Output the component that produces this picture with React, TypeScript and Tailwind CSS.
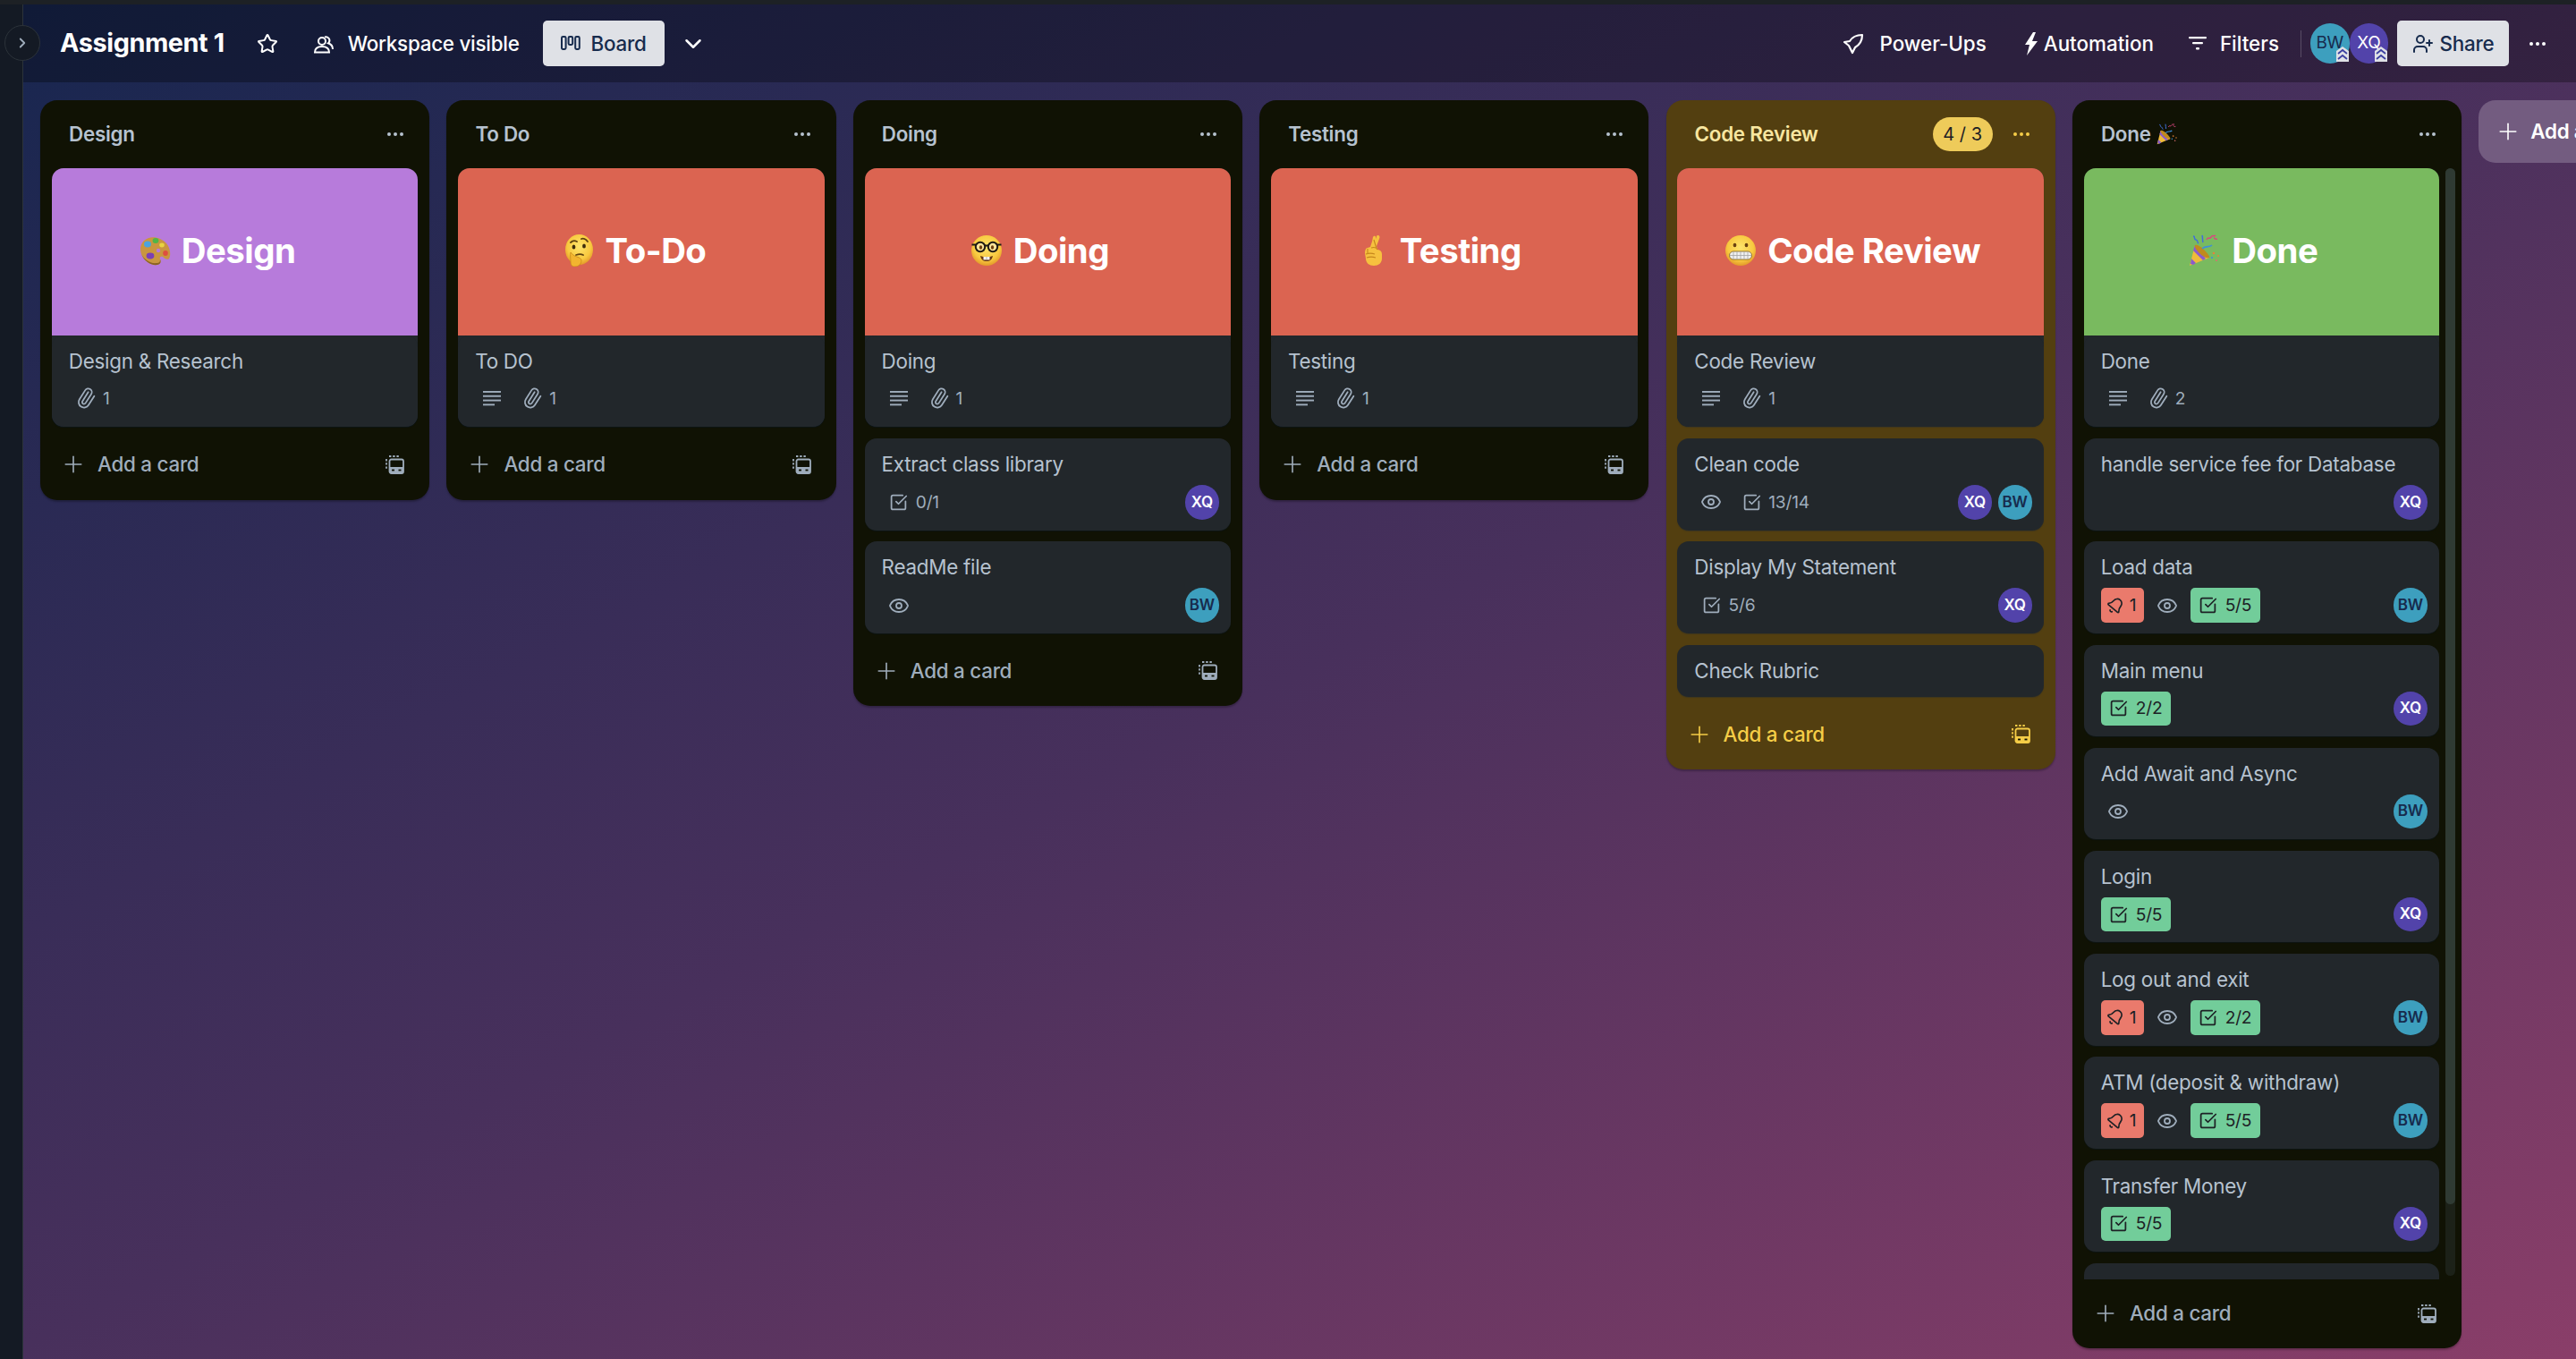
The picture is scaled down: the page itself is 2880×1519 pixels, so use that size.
import { Bell, CheckSquare, ChevronDown, ChevronRight, Eye, Paperclip, Plus, Star, UserPlus } from "lucide-react";
import type { ReactNode } from "react";

type Who = "BW" | "XQ";
type Emoji = "palette" | "think" | "nerd" | "fingers" | "grimace" | "popper";

interface CardData {
  title: string;
  lines?: boolean;
  clip?: number;
  watch?: boolean;
  check?: string;
  done?: boolean;
  alert?: boolean;
  who?: Who[];
  plain?: boolean;
  cover?: boolean;
}

interface CoverData {
  tone: string;
  shift: string;
  emoji: Emoji;
  label: string;
  caption: string;
  clip: number;
  lines: boolean;
}

function Dots({ className = "" }: { className?: string }) {
  return (
    <svg width="20" height="6" viewBox="0 0 20 6" className={className} fill="currentColor">
      <circle cx="3" cy="3" r="2" />
      <circle cx="10" cy="3" r="2" />
      <circle cx="17" cy="3" r="2" />
    </svg>
  );
}

function Face({ id }: { id: string }) {
  return (
    <defs>
      <radialGradient id={id} cx="50%" cy="40%" r="60%">
        <stop offset="0%" stopColor="#fde46b" />
        <stop offset="70%" stopColor="#f8c93f" />
        <stop offset="100%" stopColor="#e39a2a" />
      </radialGradient>
    </defs>
  );
}

function EmojiIcon({ name, size = 36 }: { name: Emoji; size?: number }) {
  if (name === "palette")
    return (
      <svg width={size} height={size} viewBox="0 0 36 36">
        <path d="M6 7C12 1 24 2 31 10c5 6 5 14 3 17-2 2-5 0-7-2-2-1-4 0-3 3 1 2 1 5-3 6C14 35 6 30 3 22 1 16 2 11 6 7z" fill="#c9963f" />
        <path d="M3 22c3 8 11 13 18 12 4-1 4-4 3-6 0 3-1 4-4 4-7 1-14-4-17-10z" fill="#8a6224" />
        <ellipse cx="10" cy="11" rx="4" ry="3.4" fill="#4aa3df" />
        <ellipse cx="19" cy="7" rx="3.4" ry="3" fill="#4fb648" />
        <ellipse cx="26" cy="12" rx="2.8" ry="2.4" fill="#e8d33f" />
        <ellipse cx="13" cy="24" rx="4.4" ry="3.4" fill="#7b3fb5" />
        <ellipse cx="30" cy="21" rx="2.8" ry="3" fill="#de4f3f" />
        <circle cx="22" cy="18" r="2.2" fill="#b77bdb" />
      </svg>
    );
  if (name === "think")
    return (
      <svg width={size} height={size} viewBox="0 0 36 36">
        <Face id="faceThink" />
        <ellipse cx="18.5" cy="17" rx="15.5" ry="17" fill="url(#faceThink)" />
        <path d="M9 9c2-2 5-2 7-1M21 5c2-1 5 0 7 3" stroke="#5e4210" strokeWidth="1.8" fill="none" strokeLinecap="round" />
        <ellipse cx="12.5" cy="14" rx="1.9" ry="2.5" fill="#3d2c0c" />
        <ellipse cx="24" cy="13" rx="1.9" ry="2.5" fill="#3d2c0c" />
        <path d="M15 23c3-1 6-1 8 0" stroke="#5e4210" strokeWidth="1.8" fill="none" strokeLinecap="round" />
        <path d="M9 20c2 2 3 4 7 5 3 1 5 2 5 4 0 4-3 7-7 7-4 0-5-2-5-6 0-3-1-7 0-10z" fill="#f2b52f" stroke="#c98a1c" strokeWidth="0.8" />
      </svg>
    );
  if (name === "nerd")
    return (
      <svg width={size} height={size} viewBox="0 0 36 36">
        <Face id="faceNerd" />
        <circle cx="18" cy="18" r="17" fill="url(#faceNerd)" />
        <circle cx="11" cy="14" r="5.2" fill="#f9e39a" stroke="#1d1a14" strokeWidth="2" />
        <circle cx="25" cy="14" r="5.2" fill="#f9e39a" stroke="#1d1a14" strokeWidth="2" />
        <path d="M16 12.5h4M1.5 11.5h4.5M30 11.5h4.5" stroke="#1d1a14" strokeWidth="2" />
        <ellipse cx="11.5" cy="14.5" rx="1.6" ry="2.2" fill="#6b3f10" />
        <ellipse cx="24.5" cy="14.5" rx="1.6" ry="2.2" fill="#6b3f10" />
        <path d="M11 24c4 1.6 10 1.6 14 0-1 4-3 6-7 6s-6-2-7-6z" fill="#6b3a14" />
        <path d="M14.5 25h7v3.4h-7z" fill="#f5f5f5" />
        <path d="M18 25v3.4" stroke="#999" strokeWidth="0.7" />
      </svg>
    );
  if (name === "fingers")
    return (
      <svg width={size} height={size} viewBox="0 0 36 36">
        <path d="M24 1c1.5.5 2 2 1 4l-3 8 1 4c3 .5 5 2 5 5v5c0 5-4 8-9 8s-9-3-9-8l-1-6c0-3 1-6 3-6l3-1 2-6 1-5c1-2 3-1.500 3 0l.5 2L22 2c.5-1 1-1.300 2-1z" fill="#f6c13f" />
        <path d="M16 15c3-1 6 0 7 2M12 16v6M10 22c3-1 7-1 10 0M11 26c3-1 7-1 10 0M19 6l3 10" stroke="#c6861d" strokeWidth="1.1" fill="none" />
      </svg>
    );
  if (name === "grimace")
    return (
      <svg width={size} height={size} viewBox="0 0 36 36">
        <Face id="faceGrim" />
        <circle cx="18" cy="18" r="17" fill="url(#faceGrim)" />
        <ellipse cx="11.500" cy="12" rx="1.900" ry="2.300" fill="#6b4210" />
        <ellipse cx="24.500" cy="12" rx="1.900" ry="2.300" fill="#6b4210" />
        <rect x="5.500" y="19" width="25" height="9" rx="4.500" fill="#efefef" stroke="#7a5a1a" strokeWidth="0.800" />
        <path d="M6 23.500h24M10 19.500v8M14 19v9M18 19v9M22 19v9M26 19.500v8" stroke="#a5a5a5" strokeWidth="0.800" />
      </svg>
    );
  return (
    <svg width={size} height={size} viewBox="0 0 36 36">
      <path d="M1 35l6-23 16 14z" fill="#eebb3a" />
      <path d="M3 27l5 5-3 2-3-1zM5 18l11 11 3-2L7 12z" fill="#8a5ccc" />
      <path d="M23 26c-3 1-7-1-11-5S6 13 7 12c2-1 6 1 10 5s7 8 6 9z" fill="#c08a1e" />
      <path d="M5 2c3 0 0 3 3 4s1 3 3 4M15 1c1 3 0 5 1 8" stroke="#3f6fd9" strokeWidth="1.500" fill="none" />
      <path d="M15 16c4-4 8-1 11-4" stroke="#3f8fd9" strokeWidth="1.600" fill="none" />
      <path d="M20 6c2-4 3 0 5-3s3 0 5-2M28 4c2 0 1 2 4 1" stroke="#d9477f" strokeWidth="1.500" fill="none" />
      <circle cx="28" cy="21" r="1.300" fill="#e2843c" />
      <circle cx="33" cy="24" r="1.100" fill="#e2843c" />
      <circle cx="31" cy="29" r="1.100" fill="#d97070" />
      <circle cx="26" cy="26" r="1.100" fill="#3f8fd9" />
    </svg>
  );
}

function LinesIcon() {
  return (
    <svg width="20" height="18" viewBox="0 0 20 18" fill="currentColor">
      <rect x="0" y="1" width="20" height="1.900" />
      <rect x="0" y="5.800" width="20" height="1.900" />
      <rect x="0" y="10.600" width="20" height="1.900" />
      <rect x="0" y="15.400" width="13" height="1.900" />
    </svg>
  );
}

function TemplateIcon() {
  return (
    <svg width="21" height="21" viewBox="0 0 21 21" fill="none">
      <path d="M1 4v12.500M4 1h12.500" stroke="currentColor" strokeWidth="1.800" strokeDasharray="2.400 1.800" />
      <rect x="4.500" y="4.500" width="15.500" height="15.500" rx="2" stroke="currentColor" strokeWidth="1.800" />
      <path d="M4.500 13h15.500v5a2 2 0 0 1-2 2H6.500a2 2 0 0 1-2-2z" fill="currentColor" />
      <rect x="7" y="15.600" width="3" height="1.800" fill="#101204" />
      <rect x="14.500" y="15.600" width="3" height="1.800" fill="#101204" />
    </svg>
  );
}

function Avatar({ who, big }: { who: Who; big?: boolean }) {
  const tone = who === "BW" ? "bg-[#3d9fbe] text-[#172b4d]" : "bg-[#5243aa] text-white";
  if (big) {
    return (
      <div className={`relative flex h-[45px] w-[43.5px] shrink-0 items-center justify-center rounded-full text-[19px] tracking-[-0.3px] ${tone}`}>
        {who}
        <svg width="14" height="17" viewBox="0 0 14 17" className="absolute bottom-[2px] right-[1px]">
          <path d="M0 5l7-5 7 5v12H0z" fill="#dfe1e6" />
          <path d="M2 8l5-4 5 4M2 14l5-4 5 4" stroke="#3b3fa0" strokeWidth="1.800" fill="none" />
        </svg>
      </div>
    );
  }
  return (
    <div className={`flex h-[38.4px] w-[38.4px] shrink-0 items-center justify-center rounded-full text-[17px] font-semibold tracking-[-0.2px] ${tone}`}>
      {who}
    </div>
  );
}

function Meta({ icon, text }: { icon: ReactNode; text?: string }) {
  return (
    <div className="mr-[6.4px] flex h-[32px] items-center px-[3.2px] text-[#9fadbc]">
      <span className="flex w-[32px] justify-center">{icon}</span>
      {text && <span className="ml-[3px] text-[19.2px] leading-none tracking-[-0.2px]">{text}</span>}
    </div>
  );
}

function Card({ card }: { card: CardData }) {
  const hasRow = !card.plain;
  return (
    <div className={`rounded-[13px] bg-[#22272b] pl-[19px] pr-[13px] pt-[13px] shadow-[0_1px_1px_#091e4240] ${hasRow ? (card.cover ? "pb-[13px]" : "pb-[12px]") : "pb-[13.6px]"}`}>
      <div className="h-[32px] text-[22.4px] leading-[32px] tracking-[-0.25px] text-[#b6c2cf]">{card.title}</div>
      {hasRow && (
        <div className={`flex h-[38.4px] items-center ${card.cover ? "mt-[6px]" : "mt-[7px]"}`}>
          {card.alert && (
            <div className="mr-[6.4px] flex h-[38.4px] items-center rounded-[5px] bg-[#ea7a6c] pr-[9px] text-[#1d2125]">
              <span className="flex w-[32px] justify-center">
                <Bell size={20} className="rotate-[40deg]" />
              </span>
              <span className="text-[19.2px]">1</span>
            </div>
          )}
          {card.lines && <Meta icon={<LinesIcon />} />}
          {card.watch && <Meta icon={<Eye size={24} strokeWidth={1.8} />} />}
          {card.clip && (
            <Meta icon={<Paperclip size={24} strokeWidth={1.8} className="-rotate-[12deg]" />} text={String(card.clip)} />
          )}
          {card.check && !card.done && <Meta icon={<CheckSquare size={21} strokeWidth={2} />} text={card.check} />}
          {card.check && card.done && (
            <div className="flex h-[38.4px] items-center rounded-[5px] bg-[#72cd9a] pl-[4px] pr-[10px] text-[#1d2125]">
              <span className="flex w-[32px] justify-center">
                <CheckSquare size={21} strokeWidth={2} />
              </span>
              <span className="ml-[3px] text-[19.2px] tracking-[-0.2px]">{card.check}</span>
            </div>
          )}
          <div className="ml-auto flex gap-[6.4px]">
            {card.who?.map((w) => <Avatar key={w} who={w} />)}
          </div>
        </div>
      )}
    </div>
  );
}

function CoverCard({ tone, shift, emoji, label, caption, clip, lines }: CoverData) {
  return (
    <div className="overflow-hidden rounded-[13px] bg-[#22272b] shadow-[0_1px_1px_#091e4240]">
      <div className={`flex h-[187px] items-center justify-center gap-[12px] pb-[3px] ${tone} ${shift}`}>
        <EmojiIcon name={emoji} />
        <span className="text-[38.4px] font-bold leading-none tracking-[-0.5px] text-white">{label}</span>
      </div>
      <Card card={{ title: caption, clip, lines, who: [], cover: true }} />
    </div>
  );
}

function Footer({ yellow }: { yellow?: boolean }) {
  return (
    <div className={`ml-[22px] mr-[28px] flex h-[58px] items-center ${yellow ? "text-[#f5cd47]" : "text-[#9fadbc]"}`}>
      <Plus size={30} strokeWidth={1.3} className="shrink-0" />
      <span className="ml-[12px] text-[22.4px] font-medium tracking-[-0.25px]">Add a card</span>
      <span className="ml-auto">
        <TemplateIcon />
      </span>
    </div>
  );
}

function ListHeader({ title, emoji, yellow }: { title: string; emoji?: Emoji; yellow?: boolean }) {
  return (
    <div className={`flex h-[76px] items-center pl-[32px] pr-[28px] ${yellow ? "text-[#f8e6a0]" : "text-[#b6c2cf]"}`}>
      <span className="text-[22.4px] font-semibold tracking-[-0.25px]">{title}</span>
      {emoji && (
        <span className="ml-[6px]">
          <EmojiIcon name={emoji} size={24} />
        </span>
      )}
      {yellow && (
        <span className="ml-auto mr-[22px] flex h-[38px] w-[67px] items-center justify-center rounded-full bg-[#eecb5a] text-[20px] text-[#1d2125]">
          4 / 3
        </span>
      )}
      <Dots className={yellow ? "text-[#f5cd47]" : "ml-auto text-[#b6c2cf]"} />
    </div>
  );
}

function Column({ title, cover, cards }: { title: string; cover: CoverData; cards: CardData[] }) {
  return (
    <div className="w-[435.2px] shrink-0 self-start rounded-[19px] bg-[#101204] shadow-[0_2px_2px_#00000040]">
      <ListHeader title={title} />
      <div className="flex flex-col gap-[12.8px] px-[12.8px] pb-[12.8px]">
        <CoverCard {...cover} />
        {cards.map((c) => (
          <Card key={c.title} card={c} />
        ))}
      </div>
      <div className="pb-[10.5px]">
        <Footer />
      </div>
    </div>
  );
}

const doneCards: CardData[] = [
  { title: "handle service fee for Database", who: ["XQ"] },
  { title: "Load data", alert: true, watch: true, check: "5/5", done: true, who: ["BW"] },
  { title: "Main menu", check: "2/2", done: true, who: ["XQ"] },
  { title: "Add Await and Async", watch: true, who: ["BW"] },
  { title: "Login", check: "5/5", done: true, who: ["XQ"] },
  { title: "Log out and exit", alert: true, watch: true, check: "2/2", done: true, who: ["BW"] },
  { title: "ATM (deposit & withdraw)", alert: true, watch: true, check: "5/5", done: true, who: ["BW"] },
  { title: "Transfer Money", check: "5/5", done: true, who: ["XQ"] },
];

const RED = "bg-[#db6451]";

export default function App() {
  return (
    <div className="flex h-[1519px] w-[2880px] flex-col overflow-hidden bg-[linear-gradient(to_bottom_right,#17264f_0%,#48305c_50%,#8a3e69_100%)] [font-family:Inter,'Noto_Sans',sans-serif]">
      <div className="h-[5px] shrink-0 bg-[#1d2125]" />
      <div className="flex min-h-0 flex-1">
        <div className="relative w-[26px] shrink-0 border-r border-[#2c333a] bg-[#141a24]">
          <div className="absolute left-[5px] top-[23px] flex h-[40px] w-[40px] items-center justify-center rounded-full border border-[#2c333a] bg-[#141a24] text-[#9fadbc]">
            <ChevronRight size={18} strokeWidth={2.4} />
          </div>
        </div>

        <div className="flex min-w-0 flex-1 flex-col">
          <header className="flex h-[87px] shrink-0 items-center bg-black/30 pl-[41px] pr-[33px] text-white">
            <span className="text-[28.8px] font-bold leading-none tracking-[-0.4px]">Assignment 1</span>
            <Star size={24} strokeWidth={2} className="ml-[36px]" />
            <svg width="24" height="22" viewBox="0 0 24 22" fill="none" stroke="currentColor" strokeWidth="2" className="ml-[39px]">
              <circle cx="10" cy="8" r="4" />
              <path d="M2 20.500c0-4.500 3.500-6.500 8-6.500s8 2 8 6.500zM13 3.500a4 4 0 0 1 5 5.500c-.4.800-1 1.300-1 1.300 3 1 5 3.500 5 6.700" />
            </svg>
            <span className="ml-[15px] text-[22.4px] font-medium tracking-[-0.25px]">Workspace visible</span>
            <div className="ml-[26px] flex h-[51px] w-[136px] items-center justify-center rounded-[5px] bg-[#dfe1e6] text-[#172b4d]">
              <svg width="22" height="20" viewBox="0 0 22 20" fill="none" stroke="currentColor" strokeWidth="2">
                <rect x="1" y="2" width="4.600" height="14" rx="1.400" />
                <rect x="8.600" y="2" width="4.600" height="9" rx="1.400" />
                <rect x="16.200" y="2" width="4.600" height="14" rx="1.400" />
              </svg>
              <span className="ml-[12px] text-[22.4px] font-medium tracking-[-0.25px]">Board</span>
            </div>
            <ChevronDown size={30} strokeWidth={2} className="ml-[17px]" />

            <div className="ml-auto flex items-center">
              <svg width="24" height="24" viewBox="0 0 24 24" fill="none" stroke="currentColor" strokeWidth="2.200" strokeLinejoin="round">
                <path d="M22 2c-6 0-11 2-14 7L2 10l5 4 4 8 3-6c5-3 8-8 8-14z" />
              </svg>
              <span className="ml-[17px] text-[22.4px] font-medium">Power-Ups</span>
              <svg width="16" height="26" viewBox="0 0 16 26" fill="currentColor" className="ml-[42px]">
                <path d="M10 0L1 14h5l-3 12 12-16H9l4-10z" />
              </svg>
              <span className="ml-[6px] text-[22.4px] font-medium">Automation</span>
              <svg width="20" height="18" viewBox="0 0 20 18" fill="currentColor" className="ml-[39px]">
                <rect x="0" y="1" width="20" height="2.200" rx="1" />
                <rect x="4" y="7" width="12" height="2.200" rx="1" />
                <rect x="8" y="13" width="4" height="2.600" rx="1" />
              </svg>
              <span className="ml-[15px] text-[22.4px] font-medium">Filters</span>
              <div className="ml-[24px] mr-[10px] h-[30px] w-px bg-white/20" />
              <Avatar who="BW" big />
              <Avatar who="XQ" big />
              <div className="ml-[10px] flex h-[51px] w-[125px] items-center justify-center rounded-[5px] bg-[#dfe1e6] text-[#172b4d]">
                <UserPlus size={24} strokeWidth={2} />
                <span className="ml-[7px] text-[22.4px] font-medium tracking-[-0.25px]">Share</span>
              </div>
              <Dots className="ml-[22px] text-white" />
            </div>
          </header>

          <main className="flex min-h-0 flex-1 items-start gap-[19.2px] pl-[19px] pt-[20px]">
            <Column title="Design" cover={{ tone: "bg-[#b77bdb]", shift: "pr-[40px]", emoji: "palette", label: "Design", caption: "Design & Research", clip: 1, lines: false }} cards={[]} />
            <Column title="To Do" cover={{ tone: RED, shift: "pr-[16px]", emoji: "think", label: "To-Do", caption: "To DO", clip: 1, lines: true }} cards={[]} />
            <Column
              title="Doing"
              cover={{ tone: RED, shift: "pr-[18px]", emoji: "nerd", label: "Doing", caption: "Doing", clip: 1, lines: true }}
              cards={[
                { title: "Extract class library", check: "0/1", who: ["XQ"] },
                { title: "ReadMe file", watch: true, who: ["BW"] },
              ]}
            />
            <Column title="Testing" cover={{ tone: RED, shift: "pr-[34px]", emoji: "fingers", label: "Testing", caption: "Testing", clip: 1, lines: true }} cards={[]} />

            <div className="w-[435.2px] shrink-0 rounded-[19px] bg-[#533f10] shadow-[0_2px_2px_#00000040]">
              <ListHeader title="Code Review" yellow />
              <div className="flex flex-col gap-[12.8px] px-[12.8px] pb-[12.8px]">
                <CoverCard tone={RED} shift="pr-[18px]" emoji="grimace" label="Code Review" caption="Code Review" clip={1} lines />
                <Card card={{ title: "Clean code", watch: true, check: "13/14", who: ["XQ", "BW"] }} />
                <Card card={{ title: "Display My Statement", check: "5/6", who: ["XQ"] }} />
                <Card card={{ title: "Check Rubric", plain: true }} />
              </div>
              <div className="pb-[10.5px]">
                <Footer yellow />
              </div>
            </div>

            <div className="flex h-[1395px] w-[435.2px] shrink-0 flex-col rounded-[19px] bg-[#101204] shadow-[0_2px_2px_#00000040]">
              <ListHeader title="Done" emoji="popper" />
              <div className="flex min-h-0 flex-1 pl-[12.8px] pr-[7px]">
                <div className="flex min-w-0 flex-1 flex-col gap-[12.8px] overflow-hidden">
                  <div className="shrink-0">
                    <CoverCard tone="bg-[#79ba5f]" shift="pr-[18px]" emoji="popper" label="Done" caption="Done" clip={2} lines />
                  </div>
                  {doneCards.map((c) => (
                    <div key={c.title} className="shrink-0">
                      <Card card={c} />
                    </div>
                  ))}
                  <div className="h-[102px] shrink-0 rounded-[13px] bg-[#22272b]" />
                </div>
                <div className="ml-[7px] h-[1238px] w-[11px] shrink-0 rounded-full bg-[#1c2118]">
                  <div className="h-[1158px] rounded-full bg-[#2f3a33]" />
                </div>
              </div>
              <div className="pb-[10px] pt-[9px]">
                <Footer />
              </div>
            </div>

            <div className="flex h-[70px] w-[436px] shrink-0 items-center rounded-[19px] bg-[#735c80] pl-[18px] text-white">
              <Plus size={30} strokeWidth={1.3} className="shrink-0" />
              <span className="ml-[10px] text-[22.4px] font-semibold tracking-[-0.25px]">Add another list</span>
            </div>
          </main>
        </div>
      </div>
    </div>
  );
}
